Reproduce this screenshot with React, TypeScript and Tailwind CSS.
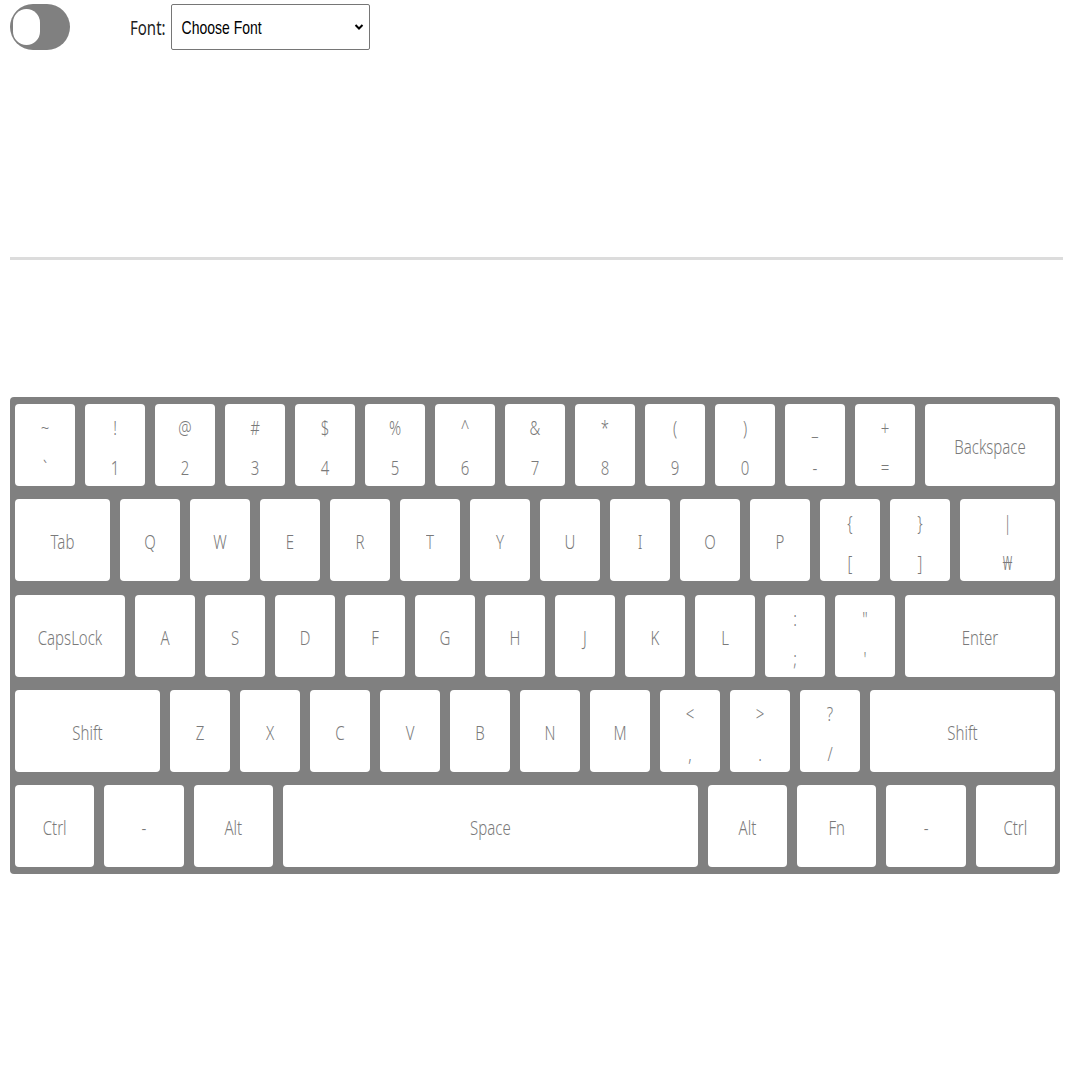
const ROW1: [string, string][] = [
  ["~", "`"], ["!", "1"], ["@", "2"], ["#", "3"], ["$", "4"], ["%", "5"], ["^", "6"],
  ["&", "7"], ["*", "8"], ["(", "9"], [")", "0"], ["_", "-"], ["+", "="],
];

const ROW2 = ["Q", "W", "E", "R", "T", "Y", "U", "I", "O", "P"];
const ROW3 = ["A", "S", "D", "F", "G", "H", "J", "K", "L"];
const ROW4 = ["Z", "X", "C", "V", "B", "N", "M"];

function Label({ children }: { children: React.ReactNode }) {
  return (
    <span className="inline-block scale-y-[1.35] text-[15px] font-light leading-[20px] text-[#7a7a7a] whitespace-nowrap">
      {children}
    </span>
  );
}

function Key({ label, className = "w-[60px]" }: { label: string; className?: string }) {
  return (
    <div className={`${className} h-[82px] shrink-0 rounded-[4px] bg-white flex items-center justify-center pt-[2px]`}>
      <Label>{label}</Label>
    </div>
  );
}

function DualKey({ top, bottom, className = "w-[60px]" }: { top: string; bottom: string; className?: string }) {
  return (
    <div className={`${className} h-[82px] shrink-0 rounded-[4px] bg-white flex flex-col items-center pt-[13px] gap-[20px]`}>
      <div className="h-[20px] flex items-center justify-center">
        <Label>{top}</Label>
      </div>
      <div className="h-[20px] flex items-center justify-center">
        <Label>{bottom}</Label>
      </div>
    </div>
  );
}

export default function App() {
  return (
    <div
      className="w-[1065px] h-[1065px] bg-white"
      style={{ fontFamily: '"Noto Sans", "Open Sans", sans-serif' }}
    >
      {/* Top bar */}
      <div className="flex items-center pt-[4px] pl-[10px]">
        <div className="w-[60px] h-[46px] rounded-full bg-[#808080] flex items-center pl-[3px]">
          <div className="w-[27px] h-[36px] rounded-full bg-white" />
        </div>
        <span className="ml-[60px] inline-block scale-y-[1.35] text-[15px] leading-[20px] text-[#222]">Font:</span>
        <div className="ml-[5px] w-[199px] h-[46px] border border-[#767676] rounded-[2px] bg-white flex items-center justify-between pl-[10px] pr-[5px]">
          <span
            className="inline-block scale-y-[1.3] text-[14px] leading-[20px] text-black"
            style={{ fontFamily: '"Liberation Sans", Arial, sans-serif' }}
          >
            Choose Font
          </span>
          <svg width="10" height="8" viewBox="0 0 10 8" className="text-black">
            <path d="M1.5 2 L5 5.5 L8.5 2" fill="none" stroke="currentColor" strokeWidth="2" />
          </svg>
        </div>
      </div>

      {/* Divider */}
      <div className="mt-[207px] ml-[10px] w-[1053px] h-[3px] bg-[#dcdcdc]" />

      {/* Keyboard */}
      <div className="mt-[137px] ml-[10px] w-[1050px] rounded-[4px] bg-[#808080] px-[5px] pt-[7px] pb-[7px] flex flex-col gap-[13.25px]">
        <div className="flex gap-[10px]">
          {ROW1.map(([t, b], i) => (
            <DualKey key={i} top={t} bottom={b} />
          ))}
          <Key label="Backspace" className="w-[130px]" />
        </div>
        <div className="flex gap-[10px]">
          <Key label="Tab" className="w-[95px]" />
          {ROW2.map((k) => (
            <Key key={k} label={k} />
          ))}
          <DualKey top="{" bottom="[" />
          <DualKey top="}" bottom="]" />
          <DualKey top="|" bottom="₩" className="w-[95px]" />
        </div>
        <div className="flex gap-[10px]">
          <Key label="CapsLock" className="w-[110px]" />
          {ROW3.map((k) => (
            <Key key={k} label={k} />
          ))}
          <DualKey top=":" bottom=";" />
          <DualKey top={'"'} bottom="'" />
          <Key label="Enter" className="w-[150px]" />
        </div>
        <div className="flex gap-[10px]">
          <Key label="Shift" className="w-[145px]" />
          {ROW4.map((k) => (
            <Key key={k} label={k} />
          ))}
          <DualKey top="<" bottom="," />
          <DualKey top=">" bottom="." />
          <DualKey top="?" bottom="/" />
          <Key label="Shift" className="w-[185px]" />
        </div>
        <div className="flex gap-[10px]">
          <Key label="Ctrl" className="w-[79.3px]" />
          <Key label="-" className="w-[79.3px]" />
          <Key label="Alt" className="w-[79.3px]" />
          <Key label="Space" className="flex-1" />
          <Key label="Alt" className="w-[79.3px]" />
          <Key label="Fn" className="w-[79.3px]" />
          <Key label="-" className="w-[79.3px]" />
          <Key label="Ctrl" className="w-[79.3px]" />
        </div>
      </div>
    </div>
  );
}
